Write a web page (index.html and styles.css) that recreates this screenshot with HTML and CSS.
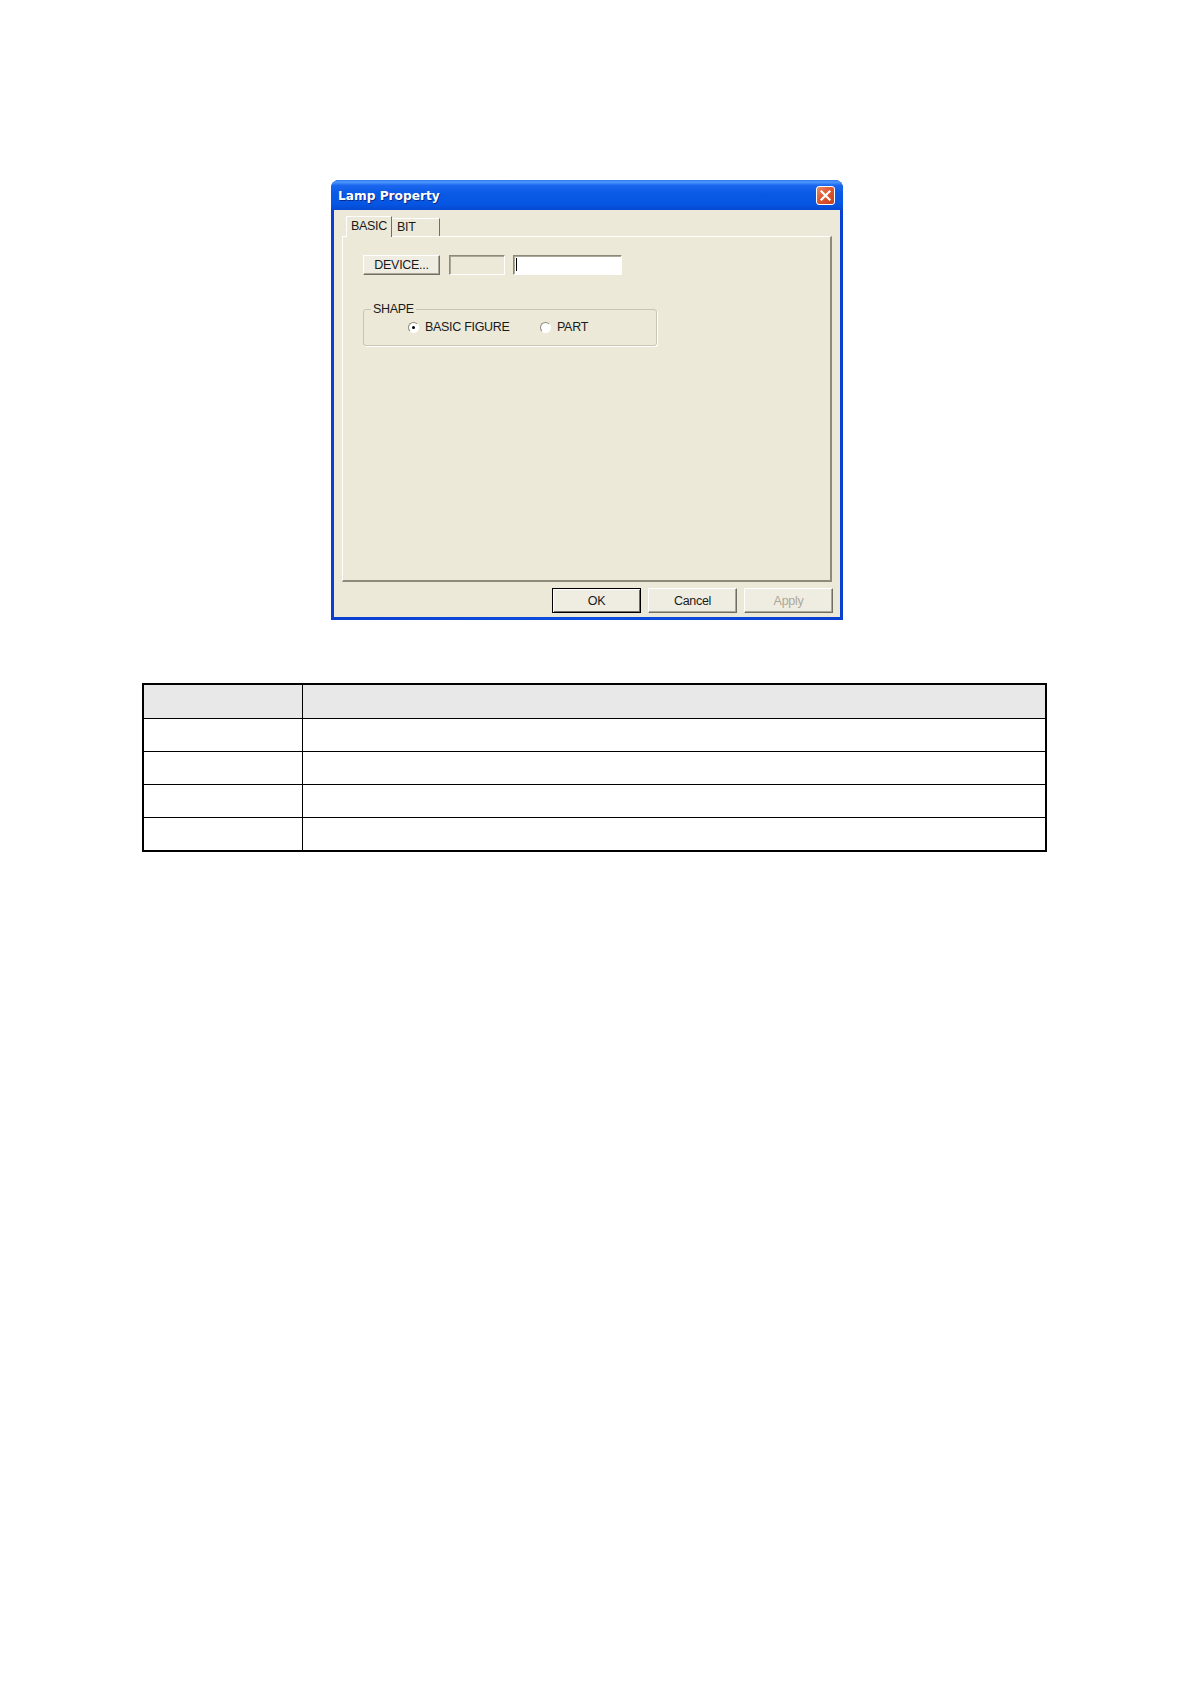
FILE: index.html
```html
<!DOCTYPE html>
<html>
<head>
<meta charset="utf-8">
<title>Lamp Property</title>
<link rel="stylesheet" href="styles.css">
</head>
<body>
<div class="page">
  <div class="dialog">
    <div class="titlebar">
      <span class="title">Lamp Property</span>
      <span class="close">
        <svg width="11" height="11" viewBox="0 0 11 11"><path d="M1.5 1.5 L9.5 9.5 M9.5 1.5 L1.5 9.5" stroke="#fff" stroke-width="2.2" stroke-linecap="square"/></svg>
      </span>
    </div>
    <div class="dlgbody">
      <div class="tabs">
        <div class="tab tab-active">BASIC</div>
        <div class="tab">BIT</div>
      </div>
      <div class="panel">
        <div class="row">
          <button class="btn btn-device">DEVICE...</button>
          <span class="field field-disabled"></span>
          <span class="field field-edit"><span class="caret"></span></span>
        </div>
        <fieldset class="group">
          <legend class="legend">SHAPE</legend>
          <div class="radios">
            <label class="radio radio-first"><span class="dot dot-on"></span>BASIC FIGURE</label>
            <label class="radio"><span class="dot"></span>PART</label>
          </div>
        </fieldset>
      </div>
      <div class="buttons">
        <button class="btn btn-default">OK</button>
        <button class="btn">Cancel</button>
        <button class="btn btn-disabled">Apply</button>
      </div>
    </div>
  </div>

  <table class="grid">
    <tr class="head"><td class="c1"></td><td></td></tr>
    <tr><td class="c1"></td><td></td></tr>
    <tr><td class="c1"></td><td></td></tr>
    <tr><td class="c1"></td><td></td></tr>
    <tr><td class="c1"></td><td></td></tr>
  </table>
</div>
</body>
</html>
```
FILE: styles.css
```css
html, body {
  margin: 0;
  padding: 0;
  background: #ffffff;
}
.page {
  padding-top: 180px;
  font-family: "Liberation Sans", Arial, sans-serif;
}
.dialog {
  width: 512px;
  margin-left: 331px;
  box-sizing: border-box;
  background: linear-gradient(90deg, #0a3fd0, #0c4fe0 50%, #0a3fd0);
  border-radius: 8px 8px 0 0;
  padding-bottom: 3px;
}
.titlebar {
  height: 30px;
  display: flex;
  align-items: center;
  justify-content: space-between;
  padding: 0 8px 0 7px;
  border-radius: 8px 8px 0 0;
  background: linear-gradient(180deg, #2a76f2 0%, #4d98fb 7%, #1b66ee 18%, #0a5ae6 45%, #0656e4 80%, #0648d2 100%);
}
.title {
  font-family: "DejaVu Sans", sans-serif;
  font-weight: bold;
  font-size: 12.2px;
  color: #ffffff;
  text-shadow: 1px 1px 0 #0a2a8a;
  margin-top: 1px;
}
.close {
  width: 19px;
  height: 19px;
  box-sizing: border-box;
  border: 1px solid #ffffff;
  border-radius: 3px;
  background: linear-gradient(135deg, #eb8a6c 0%, #de5a33 45%, #c7401a 100%);
  display: flex;
  align-items: center;
  justify-content: center;
}
.close svg { display: block; }
.dlgbody {
  margin: 0 3px;
  height: 407px;
  box-sizing: border-box;
  background: #ece9d8;
  padding: 6px 8px 0 8px;
  font-size: 12.5px;
  letter-spacing: -0.3px;
  color: #1a1a1a;
}
.tabs {
  display: flex;
  align-items: flex-end;
  padding-left: 4px;
  height: 20px;
  position: relative;
  z-index: 1;
}
.tab {
  box-sizing: border-box;
  height: 18px;
  width: 48px;
  padding-left: 5px;
  line-height: 17px;
  border-top: 1px solid #ffffff;
  border-right: 1px solid #716f64;
  background: #ece9d8;
}
.tab-active {
  width: 46px;
  height: 21px;
  margin-bottom: -1px;
  line-height: 19px;
  border-left: 1px solid #ffffff;
  padding-left: 4px;
}
.panel {
  height: 346px;
  box-sizing: border-box;
  border-top: 1px solid #ffffff;
  border-left: 1px solid #ffffff;
  border-right: 2px solid #8d8a7c;
  border-bottom: 2px solid #8d8a7c;
  padding: 18px 0 0 20px;
}
.row {
  display: flex;
  align-items: center;
  height: 20px;
}
.btn {
  font-family: "Liberation Sans", Arial, sans-serif;
  font-size: 12.5px;
  letter-spacing: -0.3px;
  color: #1a1a1a;
  background: #efede2;
  box-sizing: border-box;
  border: 1px solid;
  border-color: #ffffff #716f64 #716f64 #ffffff;
  box-shadow: inset -1px -1px 0 #aca899;
  padding: 0;
  margin: 0;
  cursor: default;
}
.btn-device {
  width: 77px;
  height: 20px;
  line-height: 16px;
}
.field {
  display: block;
  box-sizing: border-box;
  height: 20px;
  border: 1px solid;
  border-color: #8d8a7c #ffffff #ffffff #8d8a7c;
  box-shadow: inset 1px 1px 0 #aca899;
}
.field-disabled {
  width: 56px;
  margin-left: 9px;
  background: #ece9d8;
}
.field-edit {
  width: 109px;
  margin-left: 8px;
  background: #ffffff;
  padding: 2px 0 0 2px;
}
.caret {
  display: block;
  width: 1px;
  height: 13px;
  background: #000;
}
.group {
  margin: 26px 0 0 0;
  width: 294px;
  height: 45px;
  box-sizing: border-box;
  border: 1px solid #c8c5b5;
  border-radius: 3px;
  box-shadow: 1px 1px 0 #ffffff;
  padding: 0;
}
.legend {
  padding: 0 2px;
  margin-left: 7px;
  line-height: 16px;
}
.radios {
  display: flex;
  align-items: center;
  height: 20px;
  padding-left: 44px;
}
.radio {
  display: flex;
  align-items: center;
}
.radio-first {
  width: 132px;
}
.dot {
  width: 11px;
  height: 11px;
  box-sizing: border-box;
  border-radius: 50%;
  border: 1px solid;
  border-color: #8d8a7c #ffffff #ffffff #8d8a7c;
  background: #ffffff;
  margin-right: 6px;
  display: flex;
  align-items: center;
  justify-content: center;
}
.dot-on::after {
  content: "";
  width: 3px;
  height: 3px;
  border-radius: 50%;
  background: #000;
}
.buttons {
  display: flex;
  justify-content: flex-end;
  gap: 7px;
  padding: 6px 0 0 0;
  margin-right: -1px;
}
.buttons .btn {
  width: 89px;
  height: 25px;
}
.btn-default {
  border: 1px solid #000;
  box-shadow: inset 1px 1px 0 #ffffff, inset -1px -1px 0 #716f64;
}
.btn-disabled {
  color: #aca899;
}
.grid {
  margin: 63px 0 0 142px;
  width: 905px;
  border-collapse: collapse;
  border: 2px solid #000;
}
.grid td {
  border: 1px solid #000;
  height: 32px;
  padding: 0;
}
.grid .c1 {
  width: 158px;
}
.grid .head td {
  background: #e8e8e8;
  height: 33px;
}
```
